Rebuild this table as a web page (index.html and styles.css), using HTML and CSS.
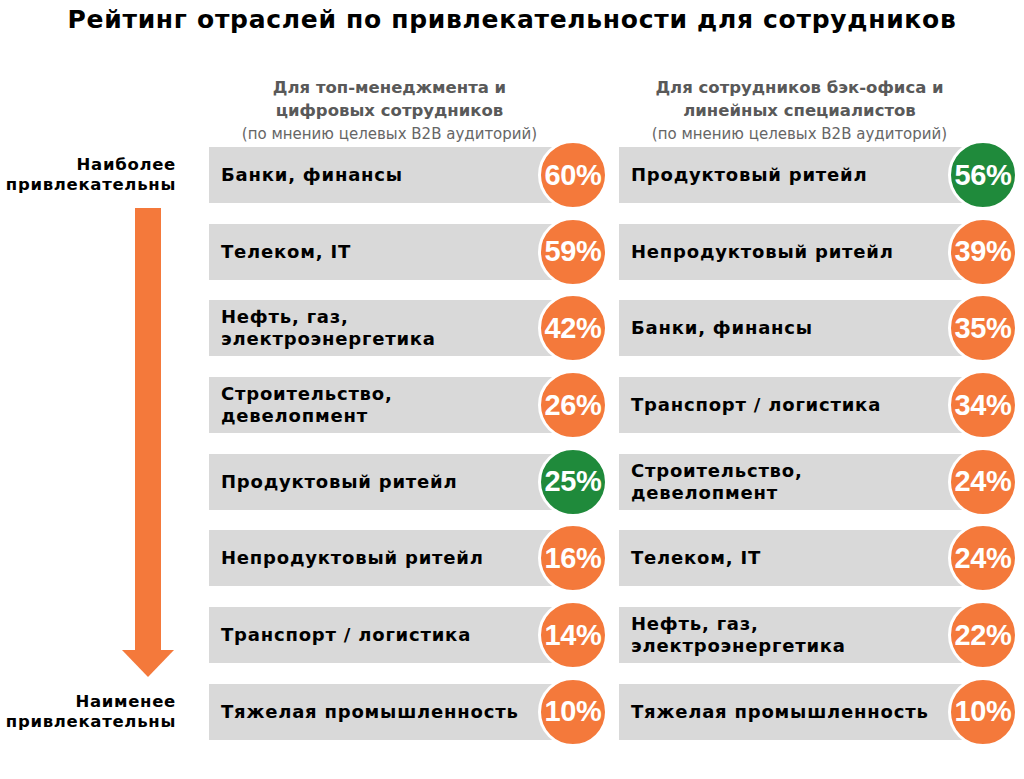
FILE: index.html
```html
<!DOCTYPE html>
<html lang="ru">
<head>
<meta charset="utf-8">
<title>Рейтинг отраслей</title>
<link rel="stylesheet" href="styles.css">
</head>
<body>
<div class="page">
  <h1 class="title">Рейтинг отраслей по привлекательности для сотрудников</h1>
  <div class="board">
    <div class="corner"></div>
    <div class="head">
      <div class="head-main">Для топ-менеджмента и<br>цифровых сотрудников</div>
      <div class="head-sub">(по мнению целевых B2B аудиторий)</div>
    </div>
    <div class="head">
      <div class="head-main">Для сотрудников бэк-офиса и<br>линейных специалистов</div>
      <div class="head-sub">(по мнению целевых B2B аудиторий)</div>
    </div>

    <div class="scale">
      <div class="scale-label">Наиболее<br>привлекательны</div>
      <div class="arrow">
        <div class="arrow-shaft"></div>
        <div class="arrow-head"></div>
      </div>
      <div class="scale-label">Наименее<br>привлекательны</div>
    </div>

    <div class="list">
      <div class="row"><div class="bar">Банки, финансы</div><div class="pct orange">60%</div></div>
      <div class="row"><div class="bar">Телеком, IT</div><div class="pct orange">59%</div></div>
      <div class="row"><div class="bar">Нефть, газ,<br>электроэнергетика</div><div class="pct orange">42%</div></div>
      <div class="row"><div class="bar">Строительство,<br>девелопмент</div><div class="pct orange">26%</div></div>
      <div class="row"><div class="bar">Продуктовый ритейл</div><div class="pct green">25%</div></div>
      <div class="row"><div class="bar">Непродуктовый ритейл</div><div class="pct orange">16%</div></div>
      <div class="row"><div class="bar">Транспорт / логистика</div><div class="pct orange">14%</div></div>
      <div class="row"><div class="bar">Тяжелая промышленность</div><div class="pct orange">10%</div></div>
    </div>

    <div class="list">
      <div class="row"><div class="bar">Продуктовый ритейл</div><div class="pct green">56%</div></div>
      <div class="row"><div class="bar">Непродуктовый ритейл</div><div class="pct orange">39%</div></div>
      <div class="row"><div class="bar">Банки, финансы</div><div class="pct orange">35%</div></div>
      <div class="row"><div class="bar">Транспорт / логистика</div><div class="pct orange">34%</div></div>
      <div class="row"><div class="bar">Строительство,<br>девелопмент</div><div class="pct orange">24%</div></div>
      <div class="row"><div class="bar">Телеком, IT</div><div class="pct orange">24%</div></div>
      <div class="row"><div class="bar">Нефть, газ,<br>электроэнергетика</div><div class="pct orange">22%</div></div>
      <div class="row"><div class="bar">Тяжелая промышленность</div><div class="pct orange">10%</div></div>
    </div>
  </div>
</div>
</body>
</html>
```

FILE: styles.css
```css
* { box-sizing: border-box; }

html, body {
  margin: 0;
  padding: 0;
  background: #ffffff;
}

body {
  font-family: "DejaVu Sans", "Liberation Sans", sans-serif;
  color: #000;
}

.page {
  width: 1024px;
  height: 779px;
  overflow: hidden;
}

.title {
  margin: 0;
  padding-top: 5px;
  font-size: 25px;
  line-height: 30px;
  font-weight: bold;
  text-align: center;
  letter-spacing: 0.7px;
}

.board {
  margin-top: 41px;
  display: grid;
  grid-template-columns: 198px 399px 399px;
  column-gap: 11px;
}

.head {
  padding-right: 38px;
  text-align: center;
  color: #595959;
}

.head-main {
  font-size: 16.5px;
  font-weight: bold;
  line-height: 23px;
}

.head-sub {
  font-size: 15px;
  line-height: 20px;
  padding-top: 2px;
  padding-bottom: 3px;
  color: #666666;
}

.scale {
  display: flex;
  flex-direction: column;
}

.scale-label {
  height: 56px;
  display: flex;
  align-items: center;
  justify-content: flex-end;
  padding-right: 22px;
  text-align: right;
  font-size: 16.5px;
  font-weight: bold;
  line-height: 20px;
  letter-spacing: 0.7px;
}

.arrow {
  flex: 1;
  width: 52px;
  margin: 5px 0 7px 122px;
  display: flex;
  flex-direction: column;
  align-items: center;
}

.arrow-shaft {
  flex: 1;
  width: 26px;
  background: #f4793b;
}

.arrow-head {
  width: 0;
  height: 0;
  border-left: 26px solid transparent;
  border-right: 26px solid transparent;
  border-top: 27px solid #f4793b;
}

.list {
  display: flex;
  flex-direction: column;
  gap: 20.7px;
}

.row {
  height: 56px;
  display: flex;
  align-items: center;
}

.bar {
  flex: 1;
  height: 56px;
  background: #d9d9d9;
  display: flex;
  align-items: center;
  padding: 0 40px 0 12px;
  font-size: 18px;
  font-weight: bold;
  line-height: 22px;
  letter-spacing: 0.8px;
}

.pct {
  flex-shrink: 0;
  width: 70px;
  height: 70px;
  margin-left: -35px;
  border: 3px solid #ffffff;
  border-radius: 50%;
  display: flex;
  align-items: center;
  justify-content: center;
  color: #ffffff;
  font-family: "Liberation Sans", Arial, sans-serif;
  font-weight: bold;
  font-size: 29px;
  letter-spacing: -0.3px;
}

.orange { background: #f4793b; }
.green { background: #1f8a3b; }
```
